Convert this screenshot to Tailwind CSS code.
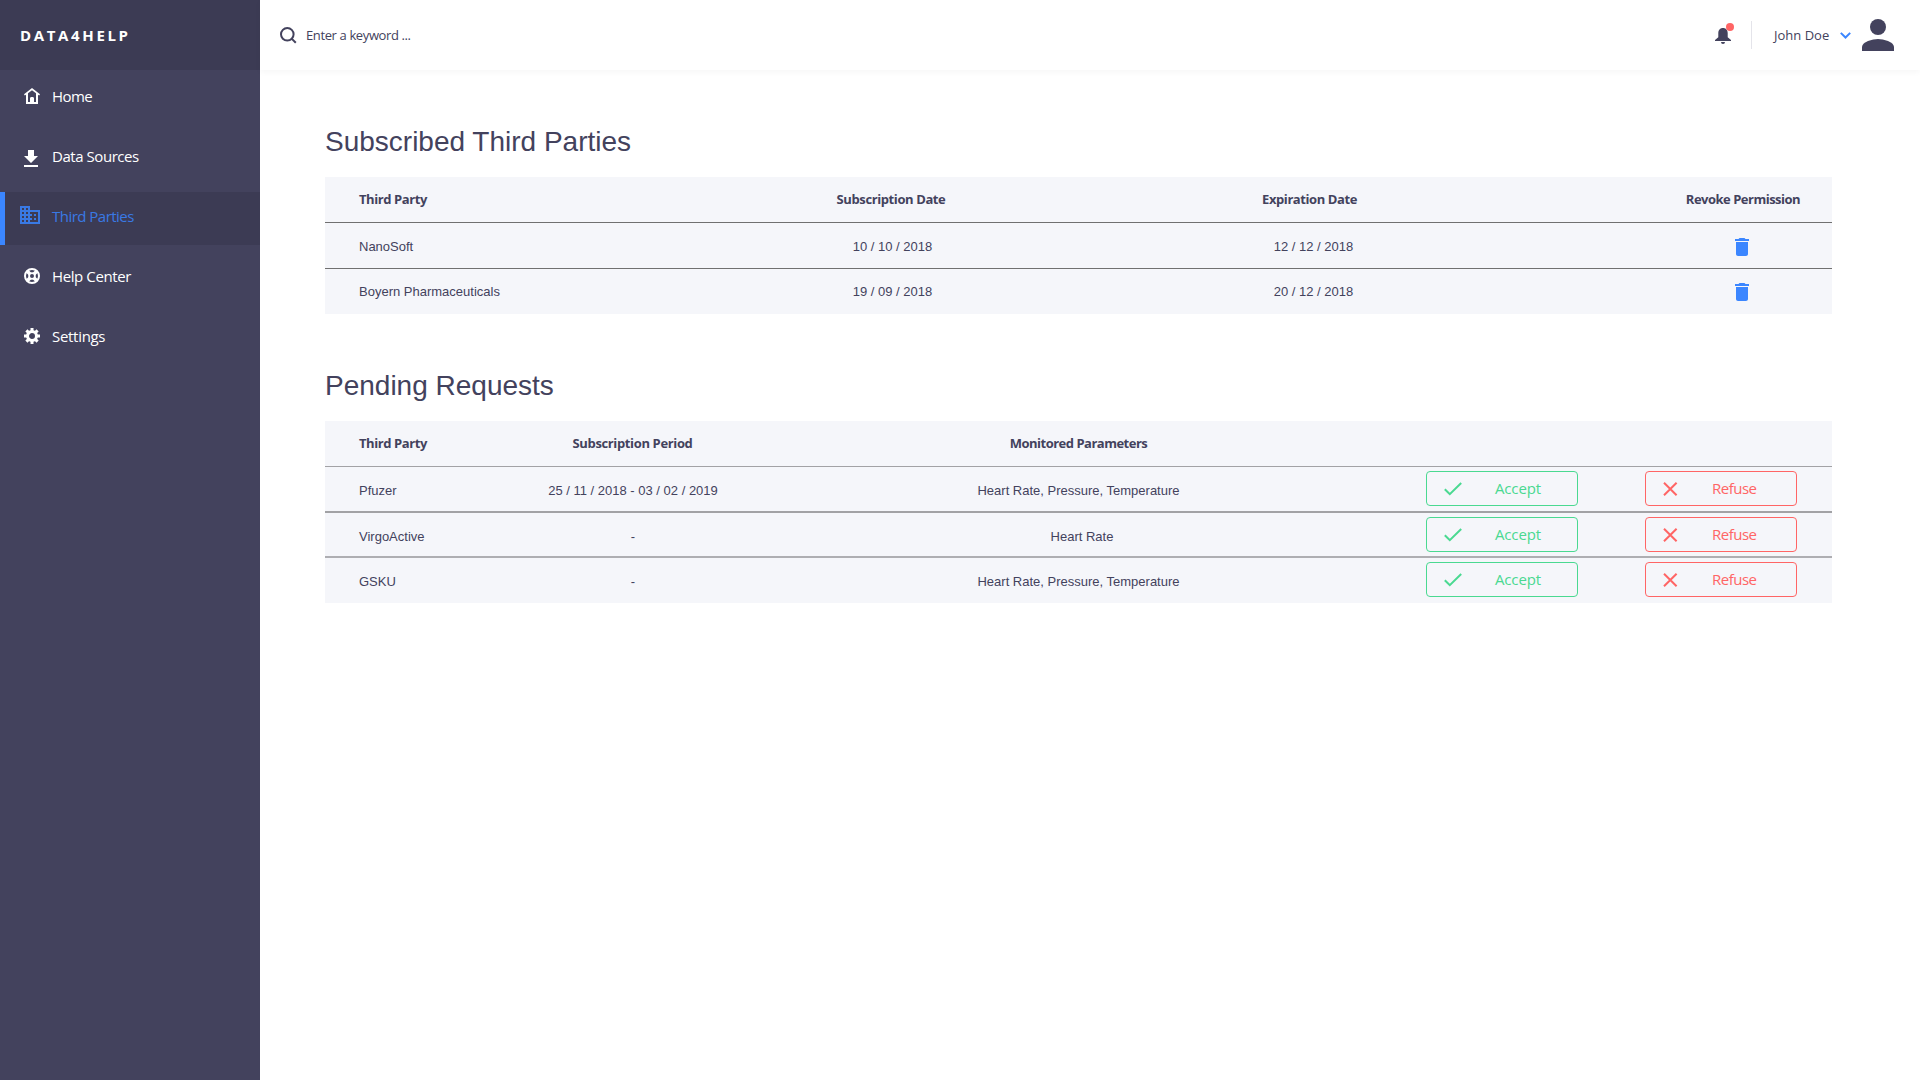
<!DOCTYPE html>
<html lang="en">
<head>
<meta charset="utf-8">
<title>Data4Help</title>
<script src="https://cdn.jsdelivr.net/npm/@tailwindcss/browser@4"></script>
</head>
<body class="flex h-screen overflow-hidden bg-white font-['Open_Sans',sans-serif] text-[#43425d]">

<aside class="flex w-[260px] shrink-0 flex-col bg-[#43425d] text-[15px] text-white">
  <div class="flex h-[70px] items-center bg-[#3c3b54] pl-5 text-[15px] font-bold tracking-[2.65px]">DATA4HELP</div>
  <nav class="flex flex-col gap-[7px] pt-[2px]">
    <a class="flex h-[53px] items-center pl-6">
      <svg class="-mt-[5px] mr-[12px] size-4" viewBox="0 0 16 16" fill="#fff"><path fill-rule="evenodd" d="M8 0 16 6.200 15.200 7.600 14 6.700V16H2V6.700L.8 7.600 0 6.200zM8 2.300 4 5.300V14h2v-3a2 2 0 0 1 4 0v3h2V5.300z"/><path d="M6 16v-5a2 2 0 0 1 4 0v5z"/></svg>
      <span class="-mt-1 tracking-[-0.6px]">Home</span>
    </a>
    <a class="flex h-[53px] items-center pl-6">
      <svg class="mr-[14px] h-[17px] w-[14px]" viewBox="0 0 14 17" fill="#fff"><path d="M4 0h6v6h4l-7 7-7-7h4zM0 15h14v2H0z"/></svg>
      <span class="-mt-1 tracking-[-0.45px]">Data Sources</span>
    </a>
    <a class="flex h-[53px] items-center border-l-[5px] border-[#3b86ff] bg-[#3c3b54] pl-[15px] text-[#3979e4]">
      <svg class="-mt-[7px] mr-[12px] h-[18px] w-5" viewBox="2 3 20 18" fill="currentColor"><path d="M12 7V3H2v18h20V7H12zM6 19H4v-2h2v2zm0-4H4v-2h2v2zm0-4H4V9h2v2zm0-4H4V5h2v2zm4 12H8v-2h2v2zm0-4H8v-2h2v2zm0-4H8V9h2v2zm0-4H8V5h2v2zm10 12h-8v-2h2v-2h-2v-2h2v-2h-2V9h8v10zm-2-8h-2v2h2v-2zm0 4h-2v2h2v-2z"/></svg>
      <span class="-mt-1 tracking-[-0.52px]">Third Parties</span>
    </a>
    <a class="flex h-[53px] items-center pl-6">
      <svg class="-mt-[5px] mr-[12px] size-4" viewBox="0 0 16 16" fill="none" stroke="#fff"><circle cx="8" cy="8" r="7" stroke-width="2"/><circle cx="8" cy="8" r="2.9" stroke-width="1.8"/><path d="m3 3 3 3M13 3l-3 3M3 13l3-3M13 13l-3-3" stroke-width="3.6"/></svg>
      <span class="-mt-1 tracking-[-0.4px]">Help Center</span>
    </a>
    <a class="flex h-[53px] items-center pl-6">
      <svg class="-mt-[5px] mr-[12px] size-4" viewBox="0 0 16 16" fill="none" stroke="#fff"><circle cx="8" cy="8" r="4.500" stroke-width="3"/><path d="M8 0v3M8 13v3M0 8h3M13 8h3M2.400 2.400l2 2M11.600 11.600l2 2M2.400 13.600l2-2M11.600 4.400l2-2" stroke-width="3"/></svg>
      <span class="-mt-1 tracking-[-0.3px]">Settings</span>
    </a>
  </nav>
</aside>

<div class="flex min-w-0 flex-1 flex-col">
  <header class="flex h-[70px] shrink-0 items-center pl-5 pr-[26px] text-[13px] shadow-[0_2px_6px_rgba(0,0,0,0.04)]">
    <svg class="mr-[9px] size-[17px]" viewBox="0 0 17 17" fill="none" stroke="#43425d" stroke-width="2"><circle cx="7.3" cy="7.3" r="6.3"/><path d="m11.6 11.6 4.2 4.2"/></svg>
    <span class="pt-[2px] tracking-[-0.38px]">Enter a keyword ...</span>
    <div class="relative ml-auto mr-[17px] h-[21px] w-[19px] -mt-[4px]">
      <svg class="mt-[5px] h-4 w-4" viewBox="0 0 16 16" fill="#43425d"><path d="M8 0c3 0 4.700 2.200 4.700 5v4.200L16 12v1H0v-1l3.300-2.800V5C3.300 2.200 5 0 8 0zM6 14h4a2 2 0 0 1-4 0z"/></svg>
      <span class="absolute right-0 top-0 size-2 rounded-full bg-[#ff6565]"></span>
    </div>
    <div class="mr-[22px] h-7 w-px bg-[#e4e4ea]"></div>
    <span class="w-[55px] whitespace-nowrap pt-[2px]">John Doe</span>
    <svg class="ml-[11px] mr-[11px] h-[7px] w-[11px]" viewBox="0 0 11 7" fill="none" stroke="#3b86ff" stroke-width="2"><path d="m.8.900 4.700 4.600L10.200.900"/></svg>
    <svg class="size-8" viewBox="0 0 32 32" fill="#43425d"><circle cx="16" cy="8" r="8"/><path d="M0 32v-4c0-5.300 10.700-8 16-8s16 2.700 16 8v4z"/></svg>
  </header>

  <main class="pl-[65px] pr-[88px] pt-[49px]">
    <h1 class="h-[58px] font-['Liberation_Sans',Arial,sans-serif] text-[28px] leading-[45px]">Subscribed Third Parties</h1>
    <section class="bg-[#f5f6fa] font-['Liberation_Sans',Arial,sans-serif] text-[13px]">
      <div class="grid h-[46px] grid-cols-[356px_421px_418px_312px] items-center border-b border-[#707070] pt-px text-center font-['Open_Sans',sans-serif] font-bold">
        <span class="pl-[34px] text-left tracking-[-0.42px]">Third Party</span>
        <span class="pr-px tracking-[-0.4px]">Subscription Date</span>
        <span class="pr-[3px] tracking-[-0.42px]">Expiration Date</span>
        <span class="pl-[134px] tracking-[-0.5px]">Revoke Permission</span>
      </div>
      <div class="grid h-[46px] grid-cols-[356px_421px_418px_312px] items-center border-b border-[#707070] pt-[2px] text-center">
        <span class="pl-[34px] text-left">NanoSoft</span>
        <span class="pl-[2px]">10 / 10 / 2018</span>
        <span class="pl-[5px]">12 / 12 / 2018</span>
        <span class="flex justify-center pl-[132px]"><svg class="h-[18px] w-[14px]" viewBox="5 3 14 18" fill="#3b86ff"><path d="M6 19c0 1.100.9 2 2 2h8c1.100 0 2-.9 2-2V7H6v12zM19 4h-3.500l-1-1h-5l-1 1H5v2h14V4z"/></svg></span>
      </div>
      <div class="grid h-[45px] grid-cols-[356px_421px_418px_312px] items-center text-center">
        <span class="pl-[34px] text-left">Boyern Pharmaceuticals</span>
        <span class="pl-[2px]">19 / 09 / 2018</span>
        <span class="pl-[5px]">20 / 12 / 2018</span>
        <span class="flex justify-center pl-[132px]"><svg class="h-[18px] w-[14px]" viewBox="5 3 14 18" fill="#3b86ff"><path d="M6 19c0 1.100.9 2 2 2h8c1.100 0 2-.9 2-2V7H6v12zM19 4h-3.500l-1-1h-5l-1 1H5v2h14V4z"/></svg></span>
      </div>
    </section>

    <h1 class="mt-[49px] h-[58px] font-['Liberation_Sans',Arial,sans-serif] text-[28px] leading-[45px]">Pending Requests</h1>
    <section id="pending" class="bg-[#f5f6fa] font-['Liberation_Sans',Arial,sans-serif] text-[13px]">
      <div class="grid h-[46px] grid-cols-[170px_275px_618px_444px] items-center border-b border-[#a2a2a5] pt-px text-center font-['Open_Sans',sans-serif] font-bold">
        <span class="pl-[34px] text-left tracking-[-0.42px]">Third Party</span>
        <span class="tracking-[-0.36px]">Subscription Period</span>
        <span class="pr-px tracking-[-0.5px]">Monitored Parameters</span>
      </div>
    </section>
  </main>
</div>

<script>
const rows = [
  ['Pfuzer', '25 / 11 / 2018 - 03 / 02 / 2019', 'Heart Rate, Pressure, Temperature', 'h-[46px] border-b-2 border-[#a2a2a5] pt-[4px]', '-mt-[5px]', 'pr-px'],
  ['VirgoActive', '-', 'Heart Rate', 'h-[45px] border-b-2 border-[#aeaeb2] pt-[5px]', '-mt-[5px]', 'pl-[6px]'],
  ['GSKU', '-', 'Heart Rate, Pressure, Temperature', 'h-[45px] pt-[2px]', '-mt-[4px]', 'pr-px'],
];
const button = (label, color, icon, tracking, gap) => `
  <button class="flex h-[35px] w-[152px] items-center rounded-[4px] border pl-[17px] font-['Open_Sans',sans-serif] text-[15px] ${color}">
    <svg class="h-[14px] w-[18px] ${gap}" viewBox="0 0 18 14" fill="none" stroke="currentColor" stroke-width="2">${icon}</svg><span class="${tracking}">${label}</span>
  </button>`;
document.getElementById('pending').insertAdjacentHTML('beforeend', rows.map(([name, period, params, row, actions, shift]) => `
  <div class="grid grid-cols-[170px_275px_618px_444px] items-center text-center ${row}">
    <span class="pl-[34px] text-left">${name}</span>
    <span class="pl-px">${period}</span>
    <span class="${shift}">${params}</span>
    <div class="flex gap-[67px] pl-[38px] ${actions}">
      ${button('Accept', 'border-[#4ad991] text-[#4ad991]', '<path d="m.8 7.200 5 5L17.200 1"/>', 'tracking-[-0.15px]', 'mr-[33px]')}
      ${button('Refuse', 'border-[#ff6565] text-[#ff6565]', '<path d="m1 .800 12.600 12.400M13.600.800 1 13.200"/>', 'tracking-[-0.5px]', 'mr-[31px]')}
    </div>
  </div>`).join(''));
</script>
</body>
</html>
